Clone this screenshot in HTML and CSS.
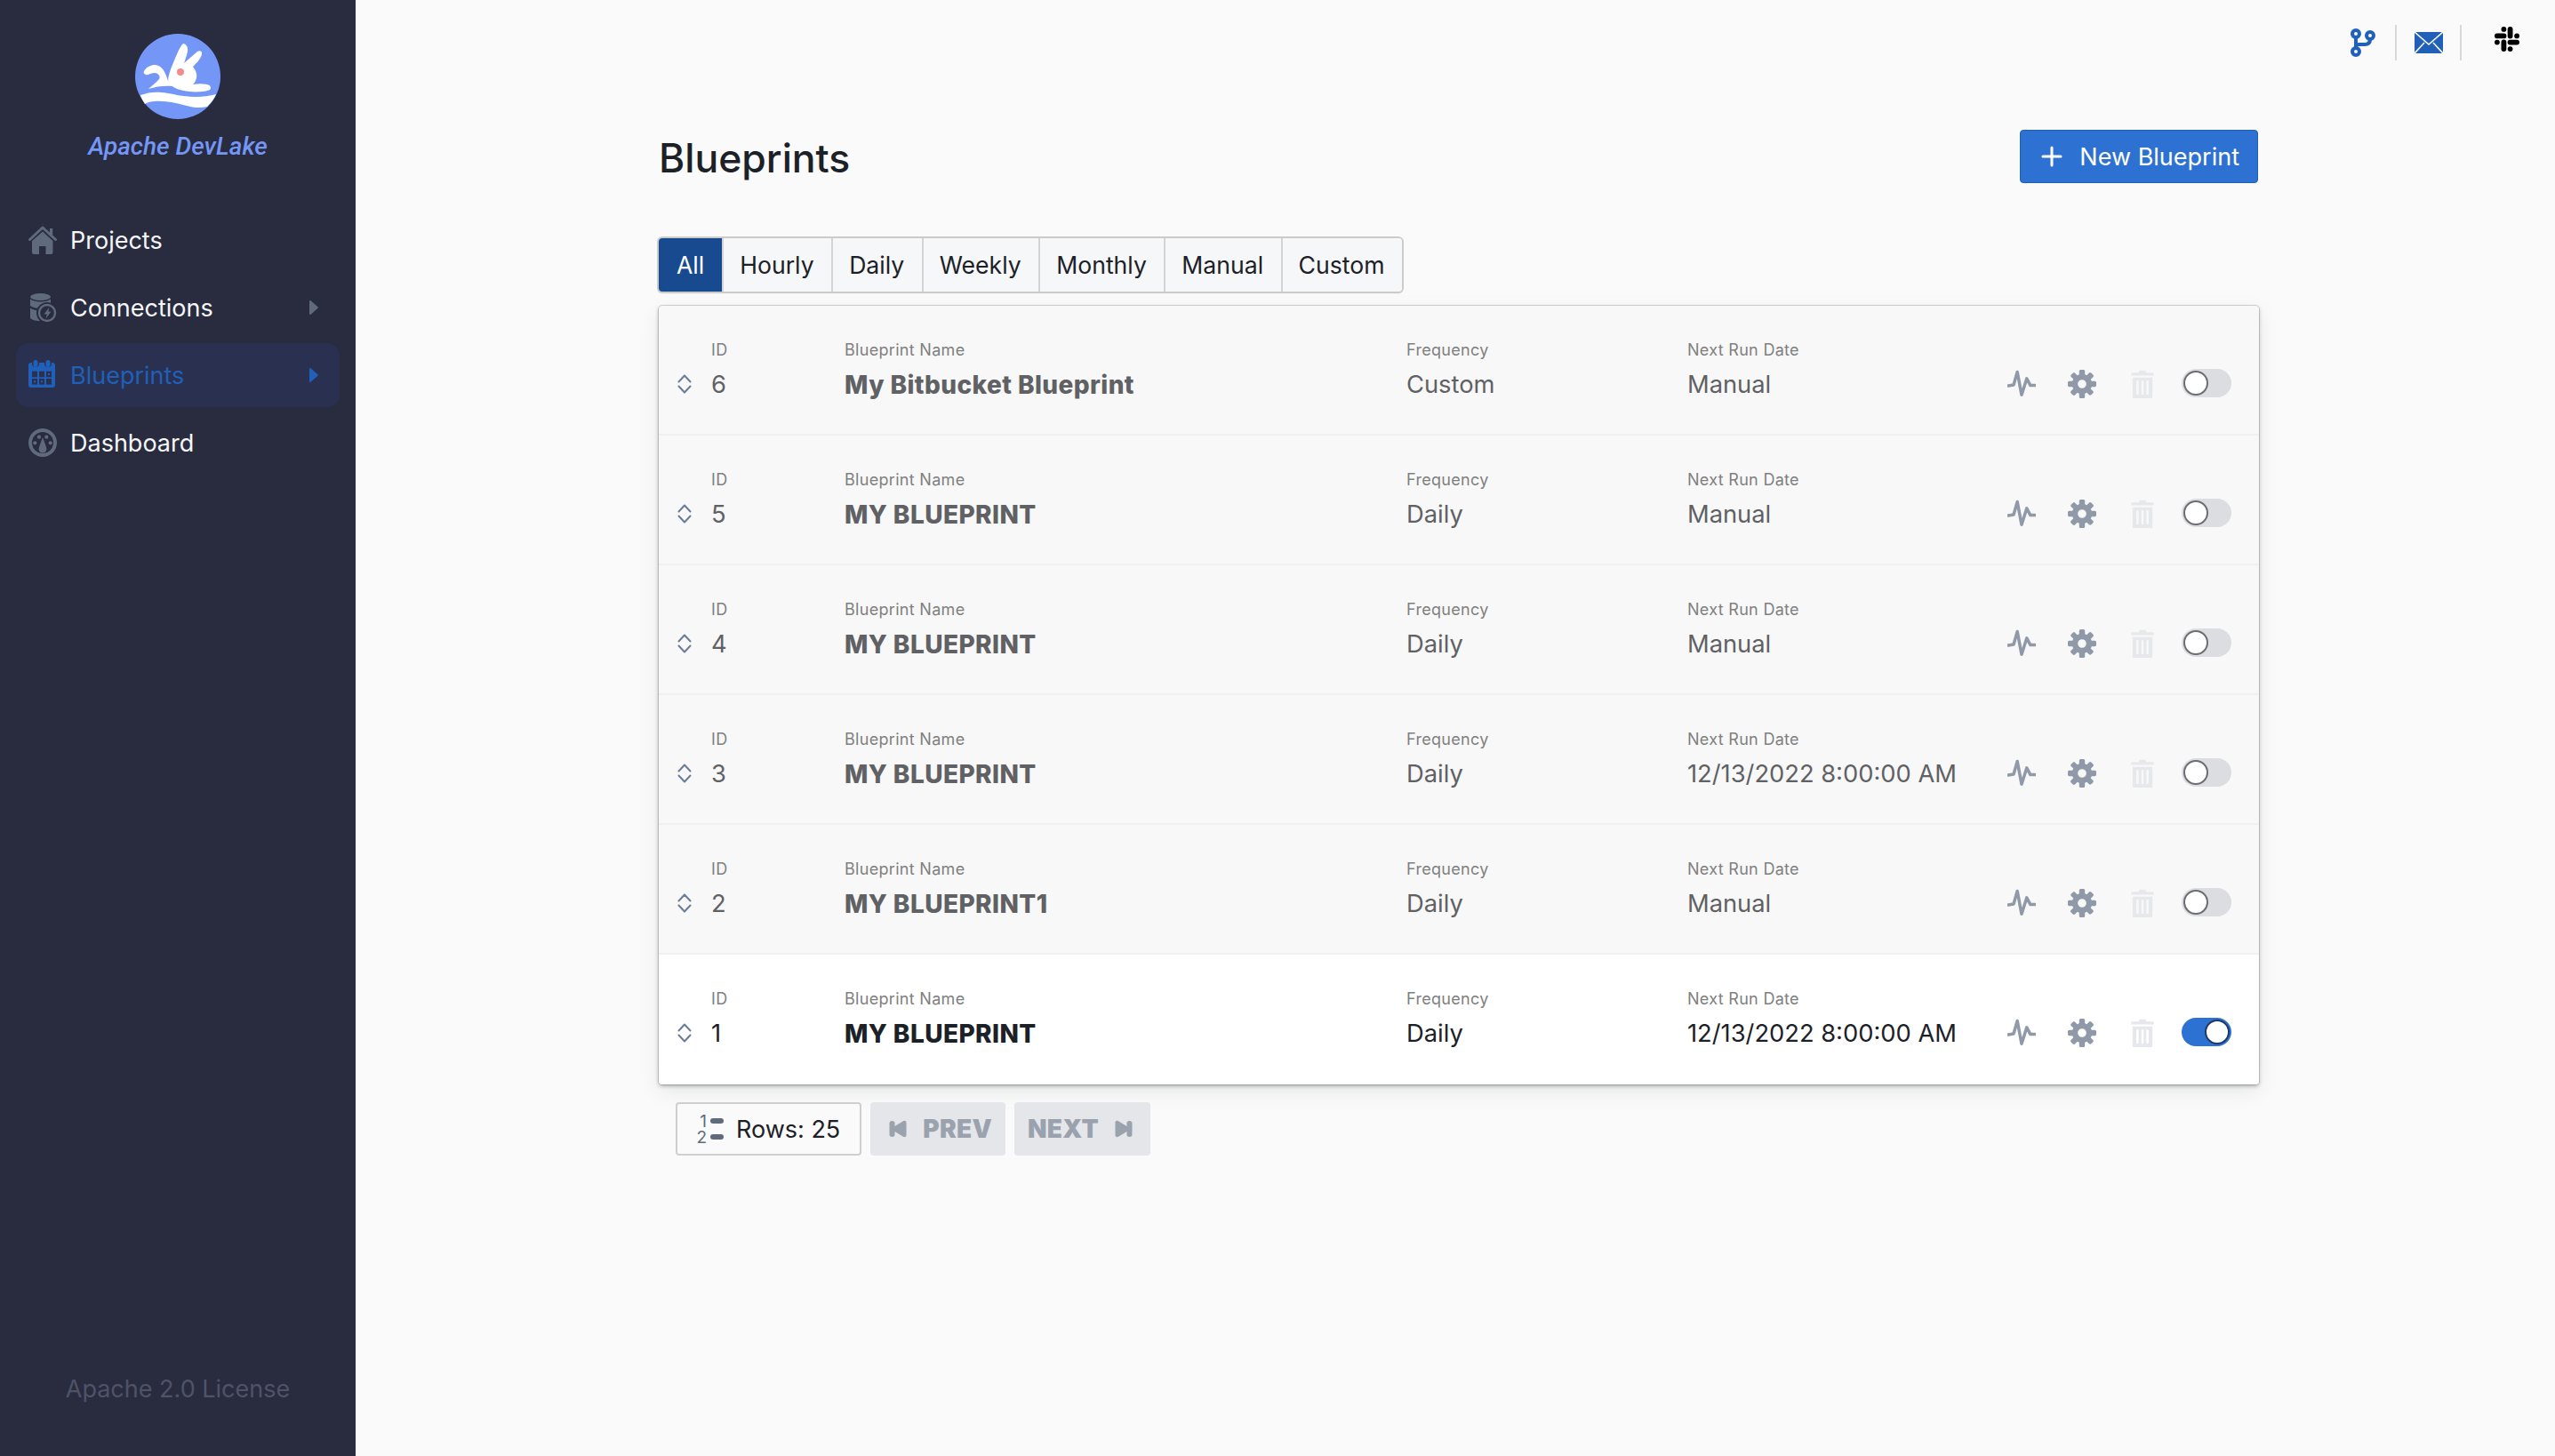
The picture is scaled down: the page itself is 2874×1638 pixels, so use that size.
FILE: index.html
```html
<!DOCTYPE html>
<html lang="en">
<head>
    <meta charset="UTF-8">
    <title>Blueprints - Apache DevLake</title>
    <link rel="stylesheet" href="styles.css">
</head>
<body>
    <svg class="sprite" xmlns="http://www.w3.org/2000/svg">
        <symbol id="i-pulse" viewBox="0 0 20 20"><path d="M.6 11.200l3.800-.6L7 1.600 10 17.600l3.600-11.400 2.600 4.800h3.200" fill="none" stroke="currentColor" stroke-width="2.200" stroke-linecap="round" stroke-linejoin="round"/></symbol>
        <symbol id="i-cog" viewBox="0 0 20 20"><path d="M19 8h-2.310c-.14-.46-.33-.89-.56-1.300l1.700-1.700a.996.996 0 000-1.410l-1.410-1.410a.996.996 0 00-1.410 0l-1.700 1.700c-.41-.22-.84-.41-1.300-.55V1c0-.55-.45-1-1-1H9c-.55 0-1 .45-1 1v2.330c-.48.14-.94.34-1.370.58L5 2.280a.972.972 0 00-1.360 0L2.280 3.640c-.37.38-.37.98 0 1.360L3.900 6.620c-.24.43-.44.89-.59 1.380H1c-.55 0-1 .45-1 1v2c0 .55.45 1 1 1h2.310c.14.46.33.89.56 1.300L2.170 15a.996.996 0 000 1.410l1.410 1.410c.39.39 1.020.39 1.410 0l1.700-1.700c.41.22.84.41 1.300.55V19c0 .55.45 1 1 1h2c.55 0 1-.45 1-1v-2.330c.48-.14.94-.34 1.370-.58L15 17.720c.37.37.98.37 1.360 0l1.360-1.360c.37-.37.37-.98 0-1.360l-1.620-1.620c.24-.43.44-.89.59-1.380H19c.55 0 1-.45 1-1V9c0-.55-.45-1-1-1zm-9 5a3 3 0 110-6 3 3 0 010 6z"/></symbol>
        <symbol id="i-trash" viewBox="0 0 20 20"><path fill-rule="evenodd" d="M7.500 1.500c0-.6.5-1 1-1h3c.5 0 1 .4 1 1v.5h4.600c.5 0 .9.4.9.9v1.200H2V2.900c0-.5.4-.9.9-.9h4.600v-.5zM3 5.500h14v13.500c0 .6-.4 1-1 1H4c-.6 0-1-.4-1-1V5.500zm3.500 2c-.5 0-.8.4-.8.8v8.400c0 .4.3.8.8.8s.8-.4.8-.8V8.300c0-.4-.3-.8-.8-.8zm3.500 0c-.5 0-.8.4-.8.8v8.400c0 .4.3.8.8.8s.8-.4.8-.8V8.300c0-.4-.3-.8-.8-.8zm3.500 0c-.5 0-.8.4-.8.8v8.400c0 .4.3.8.8.8s.8-.4.8-.8V8.300c0-.4-.3-.8-.8-.8z"/></symbol>
        <symbol id="i-sort" viewBox="0 0 16 24"><path d="M1.500 9.500L8 2.500l6.500 7M1.500 14.500L8 21.500l6.500-7" fill="none" stroke="currentColor" stroke-width="2" stroke-linecap="round" stroke-linejoin="round"/></symbol>
        <symbol id="i-caret" viewBox="0 0 10 16"><path d="M0 1v14c0 .8.9 1.200 1.500.7l8-7c.4-.4.4-1 0-1.400l-8-7C.9-.2 0 .2 0 1z"/></symbol>
    </svg>

    <div class="app">
        <aside class="sidebar">
            <div class="brand">
                <svg class="brand-logo" viewBox="0 0 96 96">
                    <circle cx="48" cy="48" r="48" fill="#7497f7"/>
                    <path fill="#fff" d="M54 11C57 11 60 15 59 20C58 25 56 30 55 33L70 20C73 18 76 20 75 23C74 28 69 33 65 37C68 41 70 45 69 50C68 53 67 55 65 57C71 56 76 56 81 57C85 58 86 61 84 63C80 65 70 66 61 65C52 64 44 62 38 56C36 52 38 46 40 40C44 30 50 14 54 11z"/>
                    <path fill="#fff" d="M10 42C13 37 18 35 22 35C28 35 33 40 36 50C37 54 39 57 42 59C34 58 24 59 15 62C19 58 24 55 27 51C29 48 26 44 22 44C18 44 15 47 12 46C10 45 9 44 10 42z"/>
                    <path fill="#fff" d="M6 69C14 66 22 65 30 66C42 67 52 71 68 71C76 71 84 70 91 68C89 73 85 78 81 82C73 84 65 83 58 81C46 78 34 75 22 76C18 76 14 77 11 79C9 76 7 72 6 69z"/>
                    <circle cx="51" cy="43" r="4" fill="#f58b8b"/>
                </svg>
                <div class="brand-name">Apache DevLake</div>
            </div>

            <nav class="nav">
                <a class="nav-item">
                    <svg class="nav-icon" viewBox="0 0 32 32">
                        <path d="M1.500 15.500L16 2l14.500 13.500" fill="none" stroke="#5f6b7c" stroke-width="3" stroke-linecap="round" stroke-linejoin="round"/>
                        <path d="M24 3h3.200v9H24zM16 6.500L27.500 17v13a2 2 0 01-2 2h-6V23H12v9H6a2 2 0 01-2-2V17z"/>
                    </svg>
                    <span>Projects</span>
                </a>
                <a class="nav-item">
                    <svg class="nav-icon" viewBox="0 0 32 32">
                        <ellipse cx="13.500" cy="4" rx="11.500" ry="4"/>
                        <path d="M2 6.500c2.500 2 7 2.900 11.500 2.900s9-.9 11.500-2.900v7.500c-2.500 2-7 3-11.500 3S4.500 16 2 14zM2 16.500c2.500 2 7 3 11.500 3s9-1 11.500-3V27c0 2.500-5 4-11.500 4S2 29.500 2 27z"/>
                        <circle cx="21" cy="22" r="12" fill="#292b3f"/>
                        <circle cx="21" cy="22" r="9" fill="none" stroke="#5f6b7c" stroke-width="2.400"/>
                        <path d="M23.500 15.500l-6 8h3.300l-1.300 5 6-8h-3.200z"/>
                    </svg>
                    <span>Connections</span>
                    <svg class="nav-caret"><use href="#i-caret"/></svg>
                </a>
                <a class="nav-item active">
                    <svg class="nav-icon" viewBox="0 0 32 32">
                        <rect y="2" width="30" height="28" rx="3"/>
                        <circle cx="8" cy="3" r="4" fill="#2a3050"/>
                        <circle cx="22" cy="3" r="4" fill="#2a3050"/>
                        <rect x="5.500" y="-1" width="5" height="8" rx="2.500"/>
                        <rect x="19.500" y="-1" width="5" height="8" rx="2.500"/>
                        <g fill="#2a3050">
                            <rect x="4" y="11.700" width="6" height="6.600"/>
                            <rect x="12" y="11.700" width="6" height="6.600"/>
                            <rect x="20" y="11.700" width="6" height="6.600"/>
                            <rect x="4" y="20" width="6" height="6.600"/>
                            <rect x="12" y="20" width="6" height="6.600"/>
                            <rect x="20" y="20" width="6" height="6.600"/>
                        </g>
                        <rect x="22" y="14" width="2" height="2"/>
                        <rect x="6" y="22.300" width="2" height="2"/>
                        <rect x="14" y="22.300" width="2" height="2"/>
                    </svg>
                    <span>Blueprints</span>
                    <svg class="nav-caret"><use href="#i-caret"/></svg>
                </a>
                <a class="nav-item">
                    <svg class="nav-icon" viewBox="0 0 32 32">
                        <path fill-rule="evenodd" d="M16 0a16 16 0 110 32 16 16 0 010-32zm0 4a12 12 0 100 24 12 12 0 000-24z"/>
                        <circle cx="7.300" cy="16.300" r="2.100"/>
                        <circle cx="12" cy="9.700" r="2.100"/>
                        <circle cx="20.300" cy="9.700" r="2.100"/>
                        <circle cx="24.700" cy="16.300" r="2.100"/>
                        <path d="M16 10l4 11a4.500 4.500 0 11-8 0z"/>
                    </svg>
                    <span>Dashboard</span>
                </a>
            </nav>

            <div class="license">Apache 2.0 License</div>
        </aside>

        <main class="main">
            <header class="topbar">
                <svg class="top-icon branch" viewBox="0 0 28 32">
                    <g fill="none" stroke="currentColor" stroke-width="4">
                        <circle cx="6" cy="6" r="4"/>
                        <circle cx="6" cy="26" r="4"/>
                        <circle cx="22" cy="8" r="4"/>
                        <path d="M6 10v12M22 12c0 4-2 6-6 6h-6c-2 0-4 1-4 3"/>
                    </g>
                </svg>
                <i class="top-sep"></i>
                <svg class="top-icon mail" viewBox="0 0 32 24">
                    <rect width="32" height="24"/>
                    <path d="M0 0l16 14L32 0M0 24l11-12M32 24L21 12" fill="none" stroke="#fafafa" stroke-width="1.600"/>
                </svg>
                <i class="top-sep"></i>
                <svg class="top-icon slack" viewBox="0 0 28 28">
                    <g fill="none" stroke="#000" stroke-width="5.800" stroke-linecap="round">
                        <path d="M2.900 10.400h7.600M17.600 2.900v7.600M25.100 17.600h-7.600M10.400 25.100v-7.600"/>
                    </g>
                    <circle cx="10.400" cy="2.900" r="2.900"/>
                    <circle cx="25.100" cy="10.400" r="2.900"/>
                    <circle cx="17.600" cy="25.100" r="2.900"/>
                    <circle cx="2.900" cy="17.600" r="2.900"/>
                </svg>
            </header>

            <div class="content">
                <div class="page-head">
                    <h1>Blueprints</h1>
                    <button class="new-btn">
                        <svg viewBox="0 0 24 24"><path d="M12 2v20M2 12h20" stroke="currentColor" stroke-width="3" stroke-linecap="round"/></svg>
                        New Blueprint
                    </button>
                </div>

                <div class="tabs">
                    <button class="tab active">All</button>
                    <button class="tab">Hourly</button>
                    <button class="tab">Daily</button>
                    <button class="tab">Weekly</button>
                    <button class="tab">Monthly</button>
                    <button class="tab">Manual</button>
                    <button class="tab">Custom</button>
                </div>

                <div class="table">
                    <div class="row">
                        <svg class="sort"><use href="#i-sort"/></svg>
                        <div class="cell"><label>ID</label><div class="val">6</div></div>
                        <div class="cell"><label>Blueprint Name</label><div class="val name">My Bitbucket Blueprint</div></div>
                        <div class="cell"><label>Frequency</label><div class="val">Custom</div></div>
                        <div class="cell"><label>Next Run Date</label><div class="val">Manual</div></div>
                        <div class="actions">
                            <svg class="act"><use href="#i-pulse"/></svg>
                            <svg class="act"><use href="#i-cog"/></svg>
                            <svg class="act trash"><use href="#i-trash"/></svg>
                            <span class="switch"></span>
                        </div>
                    </div>
                    <div class="row">
                        <svg class="sort"><use href="#i-sort"/></svg>
                        <div class="cell"><label>ID</label><div class="val">5</div></div>
                        <div class="cell"><label>Blueprint Name</label><div class="val name">MY BLUEPRINT</div></div>
                        <div class="cell"><label>Frequency</label><div class="val">Daily</div></div>
                        <div class="cell"><label>Next Run Date</label><div class="val">Manual</div></div>
                        <div class="actions">
                            <svg class="act"><use href="#i-pulse"/></svg>
                            <svg class="act"><use href="#i-cog"/></svg>
                            <svg class="act trash"><use href="#i-trash"/></svg>
                            <span class="switch"></span>
                        </div>
                    </div>
                    <div class="row">
                        <svg class="sort"><use href="#i-sort"/></svg>
                        <div class="cell"><label>ID</label><div class="val">4</div></div>
                        <div class="cell"><label>Blueprint Name</label><div class="val name">MY BLUEPRINT</div></div>
                        <div class="cell"><label>Frequency</label><div class="val">Daily</div></div>
                        <div class="cell"><label>Next Run Date</label><div class="val">Manual</div></div>
                        <div class="actions">
                            <svg class="act"><use href="#i-pulse"/></svg>
                            <svg class="act"><use href="#i-cog"/></svg>
                            <svg class="act trash"><use href="#i-trash"/></svg>
                            <span class="switch"></span>
                        </div>
                    </div>
                    <div class="row">
                        <svg class="sort"><use href="#i-sort"/></svg>
                        <div class="cell"><label>ID</label><div class="val">3</div></div>
                        <div class="cell"><label>Blueprint Name</label><div class="val name">MY BLUEPRINT</div></div>
                        <div class="cell"><label>Frequency</label><div class="val">Daily</div></div>
                        <div class="cell"><label>Next Run Date</label><div class="val">12/13/2022 8:00:00 AM</div></div>
                        <div class="actions">
                            <svg class="act"><use href="#i-pulse"/></svg>
                            <svg class="act"><use href="#i-cog"/></svg>
                            <svg class="act trash"><use href="#i-trash"/></svg>
                            <span class="switch"></span>
                        </div>
                    </div>
                    <div class="row">
                        <svg class="sort"><use href="#i-sort"/></svg>
                        <div class="cell"><label>ID</label><div class="val">2</div></div>
                        <div class="cell"><label>Blueprint Name</label><div class="val name">MY BLUEPRINT1</div></div>
                        <div class="cell"><label>Frequency</label><div class="val">Daily</div></div>
                        <div class="cell"><label>Next Run Date</label><div class="val">Manual</div></div>
                        <div class="actions">
                            <svg class="act"><use href="#i-pulse"/></svg>
                            <svg class="act"><use href="#i-cog"/></svg>
                            <svg class="act trash"><use href="#i-trash"/></svg>
                            <span class="switch"></span>
                        </div>
                    </div>
                    <div class="row enabled">
                        <svg class="sort"><use href="#i-sort"/></svg>
                        <div class="cell"><label>ID</label><div class="val">1</div></div>
                        <div class="cell"><label>Blueprint Name</label><div class="val name">MY BLUEPRINT</div></div>
                        <div class="cell"><label>Frequency</label><div class="val">Daily</div></div>
                        <div class="cell"><label>Next Run Date</label><div class="val">12/13/2022 8:00:00 AM</div></div>
                        <div class="actions">
                            <svg class="act"><use href="#i-pulse"/></svg>
                            <svg class="act"><use href="#i-cog"/></svg>
                            <svg class="act trash"><use href="#i-trash"/></svg>
                            <span class="switch on"></span>
                        </div>
                    </div>
                </div>

                <div class="pager">
                    <button class="rows-btn">
                        <span class="list-icon">
                            <span class="list-line"><b>1</b><i></i></span>
                            <span class="list-line"><b>2</b><i></i></span>
                        </span>
                        Rows: 25
                    </button>
                    <button class="page-btn prev">
                        <svg viewBox="0 0 20 20"><path d="M.5 3.500C.5 2 1.500 1 3.500 1s3 1 3 2.500V7L16 1.300c1.800-1 3.500-.2 3.500 1.700v14c0 1.900-1.700 2.700-3.500 1.700L6.500 13v3.500c0 1.500-1 2.500-3 2.500s-3-1-3-2.500z"/></svg>
                        PREV
                    </button>
                    <button class="page-btn next">
                        NEXT
                        <svg viewBox="0 0 20 20"><path d="M19.500 3.500C19.500 2 18.500 1 16.500 1s-3 1-3 2.500V7L4 1.300C2.200.3.500 1.100.5 3v14c0 1.900 1.700 2.700 3.500 1.700L13.500 13v3.500c0 1.500 1 2.500 3 2.500s3-1 3-2.500z"/></svg>
                    </button>
                </div>
            </div>
        </main>
    </div>
</body>
</html>
```

FILE: styles.css
```css
html, body {
    margin: 0;
    height: 100%;
}
body {
    font-family: Inter, "Noto Sans", sans-serif;
    font-size: 27px;
    background-color: #fafafa;
    color: #1c2127;
}
button {
    font-family: inherit;
    font-size: inherit;
}
.sprite {
    display: none;
}
.app {
    display: flex;
    height: 1638px;
}

/* sidebar */
.sidebar {
    width: 400px;
    flex: none;
    display: flex;
    flex-direction: column;
    background-color: #292b3f;
}
.brand {
    display: flex;
    flex-direction: column;
    align-items: center;
    padding-top: 38px;
}
.brand-logo {
    width: 96px;
    height: 96px;
}
.brand-name {
    margin-top: 12px;
    font-family: Roboto, sans-serif;
    font-style: italic;
    font-weight: 500;
    font-size: 28px;
    line-height: 38px;
    color: #7497f7;
}
.nav {
    display: flex;
    flex-direction: column;
    gap: 4px;
    margin-top: 50px;
    padding: 0 18px;
}
.nav-item {
    display: flex;
    align-items: center;
    height: 72px;
    padding: 0 24px 0 14px;
    border-radius: 14px;
    color: #f5f6f8;
}
.nav-item.active {
    background-color: #2a3050;
    color: #2060b8;
}
.nav-icon {
    width: 32px;
    height: 32px;
    margin-right: 15px;
    fill: #5f6b7c;
    overflow: visible;
}
.nav-item span {
    flex: 1;
}
.nav-caret {
    width: 10px;
    height: 16px;
    fill: #5f6b7c;
}
.active .nav-icon,
.active .nav-caret {
    fill: #2060b8;
}
.license {
    margin-top: auto;
    padding-bottom: 57px;
    text-align: center;
    line-height: 36px;
    color: #4f5368;
}

/* top icons */
.main {
    flex: 1;
    min-width: 0;
}
.topbar {
    display: flex;
    align-items: flex-start;
    justify-content: flex-end;
    height: 146px;
    padding-right: 40px;
}
.top-icon {
    flex: none;
}
.branch {
    width: 28px;
    height: 32px;
    margin-top: 32px;
    color: #2060b8;
}
.mail {
    width: 32px;
    height: 24px;
    margin: 36px 19px 0 20px;
    fill: #2060b8;
}
.slack {
    width: 28px;
    height: 28px;
    margin: 30px 0 0 37px;
}
.top-sep {
    width: 2px;
    height: 40px;
    margin-top: 28px;
    margin-left: 22px;
    background-color: #d8d8d8;
}
.mail + .top-sep {
    margin-left: 0;
}

/* page */
.content {
    width: 1800px;
    margin-left: 341px;
}
.page-head {
    display: flex;
    align-items: center;
    justify-content: space-between;
    height: 60px;
}
h1 {
    margin: 0;
    padding-top: 3px;
    font-size: 44.5px;
    font-weight: 500;
    color: #1c2127;
}
.new-btn {
    display: flex;
    align-items: center;
    gap: 19px;
    height: 60px;
    margin-right: 1px;
    padding: 0 20px 0 23px;
    border: 1px solid #215db0;
    border-radius: 4px;
    background-color: #2d72d2;
    color: #fff;
}
.new-btn svg {
    width: 24px;
    height: 24px;
}
.tabs {
    display: inline-flex;
    margin-top: 62px;
    border-radius: 4px;
    box-shadow: 0 0 0 2px #cbcbcb, 0 2px 2px rgba(0, 0, 0, 0.1);
    vertical-align: top;
}
.tab {
    height: 60px;
    padding: 0 19.5px 0 18px;
    border: 0;
    border-left: 2px solid #d4d4d4;
    background-color: #f6f7f9;
    color: #1c2127;
    font-size: 26.6px;
}
.tab:first-child {
    border-left: 0;
    border-radius: 4px 0 0 4px;
    padding: 0 20px;
}
.tab:last-child {
    border-radius: 0 4px 4px 0;
}
.tab.active {
    background-color: #184a90;
    color: #fff;
}

/* table */
.table {
    margin-top: 16px;
    border-radius: 4px;
    background-color: #f8f8f8;
    box-shadow: 0 0 0 1px rgba(17, 20, 24, 0.15), 0 2px 4px rgba(17, 20, 24, 0.3), 0 8px 24px rgba(17, 20, 24, 0.08);
    overflow: hidden;
}
.row {
    display: grid;
    grid-template-columns: 59px 150px 632px 316px 1fr auto;
    height: 146px;
    box-sizing: border-box;
    padding-top: 38px;
    border-bottom: 2px solid #f0f0f0;
    color: #5f6164;
}
.row:last-child {
    border-bottom: 0;
}
.row.enabled {
    background-color: #fff;
    color: #1c2127;
}
.sort {
    width: 16px;
    height: 24px;
    margin: 38px 0 0 21px;
    color: #6a7d96;
}
label {
    display: block;
    font-size: 18px;
    line-height: 24px;
    letter-spacing: 0.3px;
    color: #808080;
}
.val {
    margin-top: 7px;
    font-size: 27.3px;
    line-height: 40px;
}
.val.name {
    font-size: 28px;
    font-weight: 800;
    letter-spacing: 0.42px;
}
.actions {
    display: flex;
    align-items: center;
    height: 32px;
    margin-top: 34px;
    padding-right: 31px;
}
.act {
    width: 32px;
    height: 32px;
    margin-right: 36px;
    fill: #8f99a8;
    color: #8f99a8;
}
.act.trash {
    margin-right: 28px;
    fill: #e7e8eb;
    color: #e7e8eb;
}
.switch {
    position: relative;
    width: 56px;
    height: 32px;
    margin-bottom: 2px;
    border-radius: 16px;
    background-color: #dcdde1;
}
.switch::after {
    content: "";
    position: absolute;
    top: 2px;
    left: 2px;
    width: 28px;
    height: 28px;
    box-sizing: border-box;
    border-radius: 50%;
    border: 2px solid #6b6d70;
    background-color: #fff;
}
.switch.on {
    background-color: #2d72d2;
}
.switch.on::after {
    left: 26px;
    border-color: #1d3a66;
}

/* pagination */
.pager {
    display: flex;
    gap: 10px;
    margin: 20px 0 0 19px;
}
.rows-btn {
    display: flex;
    align-items: center;
    gap: 14px;
    height: 60px;
    padding: 0 22px 0 20px;
    border: 2px solid #cfcfcf;
    border-radius: 4px;
    background-color: #fafafa;
    color: #1c2127;
}
.list-icon {
    display: flex;
    flex-direction: column;
    gap: 3px;
}
.list-line {
    display: flex;
    align-items: center;
    gap: 4px;
}
.list-line b {
    width: 13px;
    font-size: 19px;
    font-weight: 400;
    line-height: 15px;
    text-align: right;
    color: #5f6b7c;
}
.list-line i {
    width: 15px;
    height: 6px;
    border-radius: 3px;
    background-color: #5f6b7c;
}
.page-btn {
    display: flex;
    align-items: center;
    gap: 18px;
    height: 60px;
    border: 0;
    border-radius: 4px;
    background-color: #e4e6ea;
    color: #9aa2ae;
    font-size: 28px;
    font-weight: 900;
    letter-spacing: 0.3px;
}
.page-btn.prev {
    padding: 0 15px 0 21px;
}
.page-btn.next {
    padding: 0 20px 0 15px;
}
.page-btn svg {
    width: 20px;
    height: 20px;
    fill: #9aa2ae;
}
```
